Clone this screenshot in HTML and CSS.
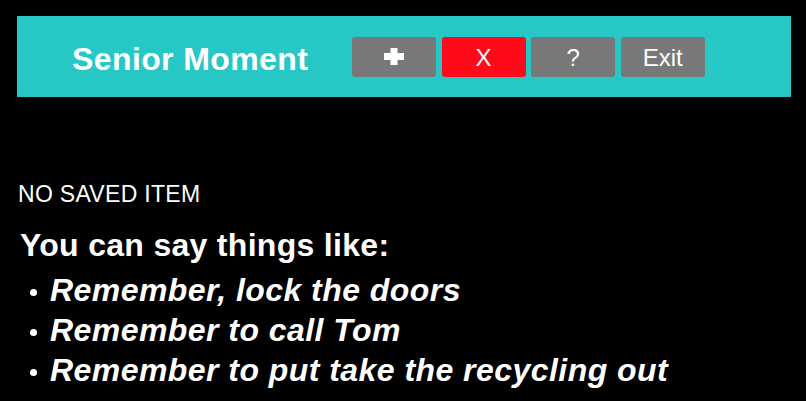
FILE: index.html
```html
<!DOCTYPE html>
<html>
<head>
<meta charset="utf-8">
<title>Senior Moment</title>
<link rel="stylesheet" href="styles.css">
</head>
<body>
<header class="topbar">
  <h1 class="title">Senior Moment</h1>
  <nav class="actions">
    <button class="btn btn-gray" aria-label="Add">
      <svg class="plus" width="20" height="17" viewBox="0 0 20 17"><path d="M6.5 0h7v5h6.5v7h-6.5v5h-7v-5h-6.5v-7h6.5z" fill="#fff"/></svg>
    </button>
    <button class="btn btn-red">X</button>
    <button class="btn btn-gray">?</button>
    <button class="btn btn-gray">Exit</button>
  </nav>
</header>
<main class="content">
  <p class="status">NO SAVED ITEM</p>
  <h2 class="hint">You can say things like:</h2>
  <ul class="examples">
    <li>Remember, lock the doors</li>
    <li>Remember to call Tom</li>
    <li>Remember to put take the recycling out</li>
  </ul>
</main>
</body>
</html>
```
FILE: styles.css
```css
html, body {
  margin: 0;
  padding: 0;
  background: #000;
  color: #fff;
  font-family: "Liberation Sans", Arial, sans-serif;
}
body {
  width: 806px;
  height: 401px;
  overflow: hidden;
}
.topbar {
  margin: 16px 0 0 17px;
  width: 774px;
  height: 81px;
  background: #27c7c6;
  display: flex;
  align-items: center;
  box-sizing: border-box;
  padding-left: 55px;
}
.title {
  margin: 4px 0 0 0;
  font-size: 32px;
  letter-spacing: 0.4px;
  font-weight: bold;
  width: 280px;
  line-height: 40px;
}
.actions {
  display: flex;
  gap: 5.6px;
}
.btn {
  width: 84px;
  height: 40px;
  border: none;
  border-radius: 3px;
  color: #fff;
  font-family: "Liberation Sans", Arial, sans-serif;
  font-size: 24px;
  padding: 2px 0 0 0;
  display: flex;
  align-items: center;
  justify-content: center;
}
.btn-gray { background: #787878; }
.btn-red { background: #ff0a1b; }
.plus { display: block; margin-top: -2px; }
.content {
  padding: 83px 0 0 18px;
}
.status {
  margin: 0;
  font-size: 23px;
  line-height: 28px;
  letter-spacing: 0.3px;
}
.hint {
  margin: 17px 0 0 2px;
  font-size: 32px;
  line-height: 40px;
  font-weight: bold;
  letter-spacing: 0.3px;
}
.examples {
  list-style: none;
  margin: 5px 0 0 0;
  padding: 0 0 0 12px;
}
.examples li {
  font-size: 32px;
  line-height: 40px;
  font-weight: bold;
  font-style: italic;
  letter-spacing: 0.45px;
}
.examples li::before {
  content: "";
  display: inline-block;
  width: 7px;
  height: 7px;
  border-radius: 50%;
  background: #fff;
  vertical-align: middle;
  margin-right: 13px;
}
```
